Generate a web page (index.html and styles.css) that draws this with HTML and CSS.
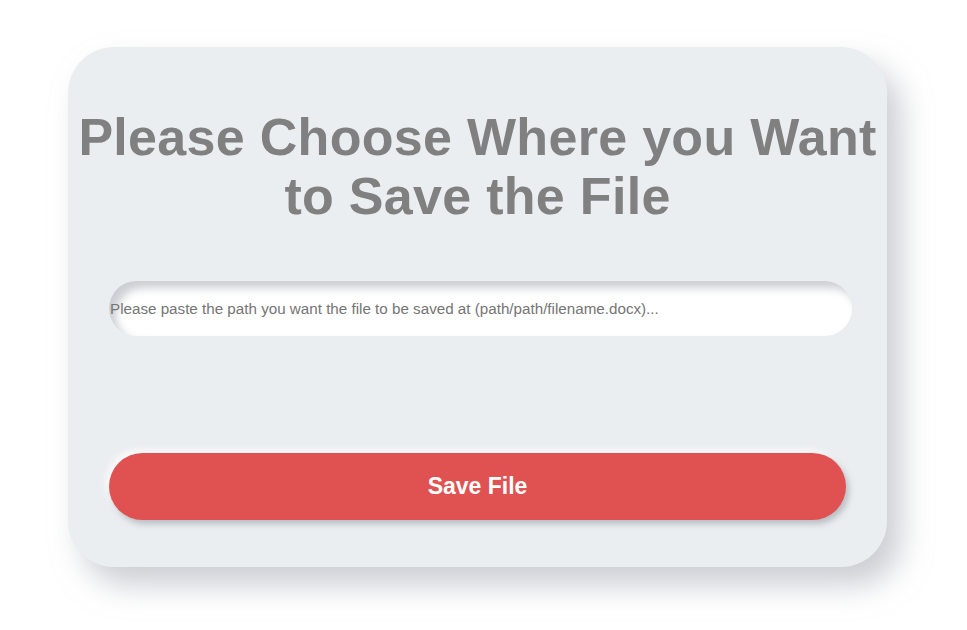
FILE: index.html
```html
<!DOCTYPE html>
<html>
<head>
<meta charset="utf-8">
<link rel="stylesheet" href="styles.css">
</head>
<body>
<div class="card">
  <h1 class="title">Please Choose Where you Want to Save the File</h1>
  <input class="path" type="text" placeholder="Please paste the path you want the file to be saved at (path/path/filename.docx)...">
  <button class="save">Save File</button>
</div>
</body>
</html>
```
FILE: styles.css
```css
html, body {
  margin: 0;
  background: #ffffff;
  font-family: "Liberation Sans", Arial, sans-serif;
}
body {
  box-sizing: border-box;
  min-height: 630px;
  padding: 47px 0 0 68px;
}
.card {
  box-sizing: border-box;
  width: 819px;
  height: 520px;
  background: #ebeef1;
  border-radius: 46px;
  box-shadow: 14px 18px 30px rgba(160, 166, 175, 0.55);
  padding: 61px 0 0 41px;
  display: flex;
  flex-direction: column;
}
.title {
  margin: 0 0 0 -41px;
  width: 819px;
  text-align: center;
  font-size: 52px;
  line-height: 59px;
  font-weight: bold;
  color: #808080;
  letter-spacing: 0.3px;
}
.path {
  box-sizing: border-box;
  margin-top: 55px;
  width: 743px;
  height: 55px;
  border: none;
  outline: none;
  border-radius: 28px;
  background: #ffffff;
  box-shadow: inset 7px 7px 9px rgba(160, 166, 175, 0.55);
  padding: 0 0 0 1px;
  font-family: "Liberation Sans", Arial, sans-serif;
  font-size: 15.2px;
  color: #555;
}
.path::placeholder {
  color: #757575;
}
.save {
  margin-top: 117px;
  width: 737px;
  height: 67px;
  border: none;
  border-radius: 34px;
  background: #e05252;
  color: #ffffff;
  font-family: "Liberation Sans", Arial, sans-serif;
  font-weight: bold;
  font-size: 23px;
  box-shadow: 3px 4px 6px rgba(150, 156, 165, 0.6), -3px -3px 6px rgba(255,255,255,0.8);
}
```
